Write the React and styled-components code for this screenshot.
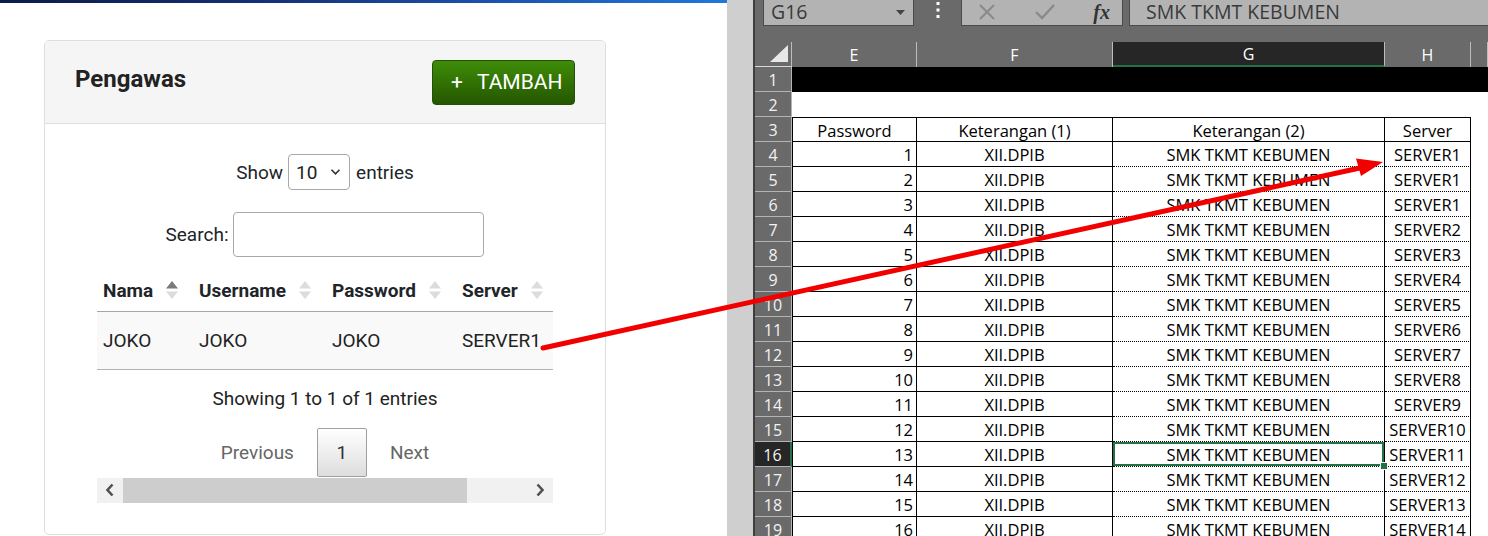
import React from 'react';
import styled, { createGlobalStyle, css } from 'styled-components';

const Global = createGlobalStyle`
  html, body { margin: 0; padding: 0; }
  body { width: 1488px; height: 536px; overflow: hidden; background: #fff; }
  #root { width: 1488px; height: 536px; }
`;

const Screen = styled.div`
  position: relative;
  display: flex;
  width: 1488px;
  height: 536px;
  overflow: hidden;
`;

/* ---------- left: web page ---------- */
const LeftPane = styled.div`
  width: 727px;
  flex: none;
  background: #fff;
  display: flex;
  flex-direction: column;
`;

const Stripe = styled.div`
  height: 3px;
  background: linear-gradient(90deg, #0c1a48 0%, #142f74 35%, #1b4fa8 65%, #1f78dc 100%);
`;

const Card = styled.div`
  margin: 37px 0 0 44px;
  width: 562px;
  box-sizing: border-box;
  border: 1px solid #dedede;
  border-radius: 5px;
  font-family: Roboto, "Liberation Sans", sans-serif;
  color: #212529;
  overflow: hidden;
`;

const CardHeader = styled.div`
  height: 82px;
  background: #f5f5f5;
  border-bottom: 1px solid #dcdcdc;
  display: flex;
  align-items: center;
  justify-content: space-between;
  padding: 0 30px;
`;

const Title = styled.h3`
  margin: 0 0 7px;
  font-size: 24px;
  font-weight: 700;
  color: #222;
`;

const AddButton = styled.button`
  width: 143px;
  height: 45px;
  box-sizing: border-box;
  display: flex;
  align-items: center;
  gap: 14px;
  padding: 0 0 0 18px;
  background: linear-gradient(#3e8d08, #255600);
  border: 1px solid #24500a;
  border-radius: 4px;
  color: #fff;
  font-family: Roboto, "Liberation Sans", sans-serif;
  font-size: 21px;
`;

const CardBody = styled.div`
  padding: 30px 52px 31px;
  display: flex;
  flex-direction: column;
  font-size: 19px;
`;

const ControlRow = styled.div`
  display: flex;
  justify-content: center;
  align-items: center;
  gap: ${p => p.$gap || 5}px;
  height: ${p => p.$h}px;
  margin-top: ${p => p.$mt || 0}px;
`;

const SelectBox = styled.div`
  width: 62px;
  height: 36px;
  box-sizing: border-box;
  border: 1px solid #a9a9a9;
  border-radius: 4px;
  display: flex;
  align-items: center;
  justify-content: space-between;
  padding: 0 8px 0 7px;
  color: #222;
`;

const SearchInput = styled.div`
  width: 251px;
  height: 45px;
  box-sizing: border-box;
  border: 1px solid #a9a9a9;
  border-radius: 4px;
`;

const TableWrap = styled.div`
  margin-top: 13px;
  width: 456px;
  overflow: hidden;
`;

const Table = styled.table`
  width: 456px;
  border-collapse: collapse;
  table-layout: fixed;
  font-size: 19px;
`;

const Th = styled.th`
  box-sizing: border-box;
  width: ${p => p.$w}px;
  height: 41px;
  padding: 0 0 0 6px;
  text-align: left;
  font-weight: 700;
  border-bottom: 1px solid #a6a6a6;
  white-space: nowrap;
  vertical-align: middle;
`;

const ThInner = styled.span`
  display: inline-flex;
  align-items: center;
  gap: 13px;
`;

const Td = styled.td`
  height: 57px;
  padding: 0 0 0 6px;
  background: #f9f9f9;
  border-bottom: 1px solid #b3b3b3;
  white-space: nowrap;
  overflow: visible;
  color: #222;
`;

const Info = styled.div`
  padding-top: 17px;
  line-height: 24px;
  text-align: center;
  color: #222;
`;

const Pager = styled.div`
  margin-top: 17px;
  height: 50px;
  display: flex;
  justify-content: center;
  align-items: flex-start;
  gap: 23px;
`;

const PagerLink = styled.span`
  line-height: 49px;
  color: #666;
`;

const PageButton = styled.div`
  width: 50px;
  height: 49px;
  box-sizing: border-box;
  border: 1px solid #a0a0a0;
  border-radius: 2px;
  background: linear-gradient(#ffffff, #dddddd);
  display: flex;
  align-items: center;
  justify-content: center;
  color: #333;
`;

const ScrollBar = styled.div`
  height: 25px;
  display: flex;
  background: #f1f1f1;
`;

const ScrollArrow = styled.div`
  width: 26px;
  display: flex;
  align-items: center;
  justify-content: center;
`;

const ScrollThumb = styled.div`
  width: 344px;
  background: #cdcdcd;
`;

const ScrollTrack = styled.div`
  flex: 1;
`;

const Divider = styled.div`
  width: 26px;
  flex: none;
  background: #cfcfcf;
`;

/* ---------- right: spreadsheet ---------- */
const ExcelPane = styled.div`
  flex: 1;
  background: #6a6a6a;
  border-left: 2px solid #3e3e3e;
  display: flex;
  flex-direction: column;
  font-family: "Open Sans", "Noto Sans", sans-serif;
  min-width: 0;
`;

const FormulaBar = styled.div`
  height: 42px;
  flex: none;
  display: flex;
  align-items: flex-start;
  padding-left: 8px;
`;

const BarBox = styled.div`
  height: 26px;
  box-sizing: border-box;
  background: #b3b3b3;
  border: 1px solid #4b4b4b;
  border-top: none;
  display: flex;
  align-items: center;
  color: #3a3a3a;
  font-size: 19.5px;
  line-height: 24px;
`;

const NameBox = styled(BarBox)`
  width: 151px;
  padding: 0 8px 1px 7px;
  justify-content: space-between;
`;

const Dots = styled.div`
  width: 47px;
  height: 26px;
  display: flex;
  justify-content: center;
`;

const FxBox = styled(BarBox)`
  width: 162px;
  padding: 0 12px 2px 16px;
  justify-content: space-between;
`;

const FormulaInput = styled(BarBox)`
  flex: 1;
  margin-left: 6px;
  padding: 0 0 1px 16px;
  border-right: none;
`;

const Grid = styled.div`
  display: grid;
  grid-template-columns: 37px 125px 196px 272px 86px 1fr;
  grid-auto-rows: 25px;
`;

const Corner = styled.div`
  display: flex;
  align-items: flex-end;
  justify-content: flex-end;
  padding: 0 3px 4px 0;
  border-bottom: 1px solid #d8d8d8;
  border-right: 1px solid #bdbdbd;
`;

const ColHead = styled.div`
  box-sizing: border-box;
  display: flex;
  align-items: center;
  justify-content: center;
  color: #fff;
  font-size: 16px;
  border-right: 1px solid #bcbcbc;
  ${p => p.$active && css`
    background: #262626;
    border-bottom: 2px solid #217346;
  `}
`;

const RowHead = styled.div`
  box-sizing: border-box;
  display: flex;
  align-items: center;
  justify-content: center;
  color: #f2f2f2;
  font-size: 16px;
  background: ${p => (p.$active ? '#262626' : '#6a6a6a')};
  border-bottom: 1px solid #b4b4b4;
  border-right: ${p => (p.$active ? '2px solid #217346' : '1px solid #b4b4b4')};
  padding-top: 1px;
`;

const Cell = styled.div`
  box-sizing: border-box;
  position: relative;
  display: flex;
  align-items: center;
  justify-content: ${p => (p.$align === 'right' ? 'flex-end' : 'center')};
  padding: 1px 3px 0;
  background: ${p => p.$fill || '#fff'};
  border-top: ${p => p.$bt || 'none'};
  border-left: ${p => p.$bl || 'none'};
  border-right: ${p => p.$br || 'none'};
  border-bottom: ${p => p.$bb || 'none'};
  white-space: nowrap;
  font-size: 16.5px;
  color: #000;
  ${p => p.$selected && css`
    z-index: 2;
    box-shadow: inset 0 0 0 2px #217346;
    &::after {
      content: '';
      position: absolute;
      right: -4px;
      bottom: -4px;
      width: 6px;
      height: 6px;
      background: #217346;
      border: 1px solid #fff;
    }
  `}
`;

const ArrowOverlay = styled.svg`
  position: absolute;
  left: 0;
  top: 0;
  pointer-events: none;
`;

const SOLID = '1px solid #000';
const DOT = '1px dotted #000';

const SortIcon = ({ active }) => (
  <svg width="12" height="18" viewBox="0 0 12 18">
    <polygon points="6,0 12,7.5 0,7.5" fill={active ? '#7a7a7a' : '#dcdcdc'} />
    <polygon points="0,10.5 12,10.5 6,18" fill="#dcdcdc" />
  </svg>
);

const Chevron = ({ dir }) => (
  <svg width="10" height="14" viewBox="0 0 10 14">
    <path
      d={dir === 'left' ? 'M7.5 1.5 L2.5 7 L7.5 12.5' : 'M2.5 1.5 L7.5 7 L2.5 12.5'}
      fill="none"
      stroke="#505050"
      strokeWidth="2.6"
    />
  </svg>
);

const rows = Array.from({ length: 16 }, (_, i) => ({
  n: i + 4,
  pw: i + 1,
  server: i < 3 ? 1 : i - 1,
}));

export default function App() {
  const headCols = ['E', 'F', 'G', 'H', ''];
  return (
    <Screen>
      <Global />
      <LeftPane>
        <Stripe />
        <Card>
          <CardHeader>
            <Title>Pengawas</Title>
            <AddButton>
              <span>+</span>
              <span>TAMBAH</span>
            </AddButton>
          </CardHeader>
          <CardBody>
            <ControlRow $h={36}>
              <span>Show</span>
              <SelectBox>
                <span>10</span>
                <svg width="11" height="8" viewBox="0 0 11 8">
                  <path d="M1.5 1.8 L5.5 5.8 L9.5 1.8" fill="none" stroke="#333" strokeWidth="1.6" />
                </svg>
              </SelectBox>
              <span style={{ marginLeft: 1 }}>entries</span>
            </ControlRow>
            <ControlRow $h={45} $mt={22}>
              <span>Search:</span>
              <SearchInput />
            </ControlRow>
            <TableWrap>
              <Table>
                <thead>
                  <tr>
                    <Th $w={96}><ThInner>Nama<SortIcon active /></ThInner></Th>
                    <Th $w={133}><ThInner>Username<SortIcon /></ThInner></Th>
                    <Th $w={130}><ThInner>Password<SortIcon /></ThInner></Th>
                    <Th $w={97}><ThInner>Server<SortIcon /></ThInner></Th>
                  </tr>
                </thead>
                <tbody>
                  <tr>
                    <Td>JOKO</Td>
                    <Td>JOKO</Td>
                    <Td>JOKO</Td>
                    <Td>SERVER1</Td>
                  </tr>
                </tbody>
              </Table>
            </TableWrap>
            <Info>Showing 1 to 1 of 1 entries</Info>
            <Pager>
              <PagerLink>Previous</PagerLink>
              <PageButton>1</PageButton>
              <PagerLink>Next</PagerLink>
            </Pager>
            <ScrollBar>
              <ScrollArrow><Chevron dir="left" /></ScrollArrow>
              <ScrollThumb />
              <ScrollTrack />
              <ScrollArrow><Chevron dir="right" /></ScrollArrow>
            </ScrollBar>
          </CardBody>
        </Card>
      </LeftPane>

      <Divider />

      <ExcelPane>
        <FormulaBar>
          <NameBox>
            <span>G16</span>
            <svg width="9" height="5" viewBox="0 0 9 5"><polygon points="0,0 9,0 4.5,5" fill="#444" /></svg>
          </NameBox>
          <Dots>
            <svg width="4" height="20" viewBox="0 0 4 20">
              <rect x="0.5" y="2" width="3" height="3" fill="#fff" />
              <rect x="0.5" y="8.5" width="3" height="3" fill="#fff" />
              <rect x="0.5" y="15" width="3" height="3" fill="#fff" />
            </svg>
          </Dots>
          <FxBox>
            <svg width="18" height="18" viewBox="0 0 18 18">
              <path d="M2 2 L16 16 M16 2 L2 16" stroke="#8a8a8a" strokeWidth="2" />
            </svg>
            <svg width="22" height="18" viewBox="0 0 22 18">
              <path d="M2 9 L8 15 L20 2" fill="none" stroke="#8a8a8a" strokeWidth="2.4" />
            </svg>
            <span style={{ fontFamily: '"Liberation Serif", serif', fontStyle: 'italic', fontWeight: 700, fontSize: 20, color: '#333' }}>fx</span>
          </FxBox>
          <FormulaInput>SMK TKMT KEBUMEN</FormulaInput>
        </FormulaBar>

        <Grid>
          <Corner>
            <svg width="18" height="17" viewBox="0 0 18 17"><polygon points="18,0 18,17 0,17" fill="#e8e8e8" /></svg>
          </Corner>
          {headCols.map((c, i) => (
            <ColHead key={i} $active={c === 'G'}>{c}</ColHead>
          ))}

          <RowHead>1</RowHead>
          {headCols.map((_, i) => <Cell key={i} $fill="#000" />)}

          <RowHead>2</RowHead>
          {headCols.map((_, i) => <Cell key={i} />)}

          <RowHead>3</RowHead>
          <Cell $bt={SOLID} $bl={SOLID} $br={SOLID} $bb={SOLID}>Password</Cell>
          <Cell $bt={SOLID} $br={SOLID} $bb={SOLID}>Keterangan (1)</Cell>
          <Cell $bt={SOLID} $br={SOLID} $bb={SOLID}>Keterangan (2)</Cell>
          <Cell $bt={SOLID} $br={SOLID} $bb={SOLID}>Server</Cell>
          <Cell />

          {rows.map(r => (
            <React.Fragment key={r.n}>
              <RowHead $active={r.n === 16}>{r.n}</RowHead>
              <Cell $align="right" $bl={SOLID} $br={SOLID} $bb={SOLID}>{r.pw}</Cell>
              <Cell $br={SOLID} $bb={SOLID}>XII.DPIB</Cell>
              <Cell $br={SOLID} $bb={DOT} $selected={r.n === 16}>SMK TKMT KEBUMEN</Cell>
              <Cell $br={SOLID} $bb={DOT}>SERVER{r.server}</Cell>
              <Cell />
            </React.Fragment>
          ))}
        </Grid>
      </ExcelPane>

      <ArrowOverlay width="1488" height="536" viewBox="0 0 1488 536">
        <line x1="543" y1="348" x2="1362" y2="167.5" stroke="#f20000" strokeWidth="5" strokeLinecap="round" />
        <polygon points="1383,162 1356,158.5 1361,176" fill="#f20000" />
      </ArrowOverlay>
    </Screen>
  );
}
